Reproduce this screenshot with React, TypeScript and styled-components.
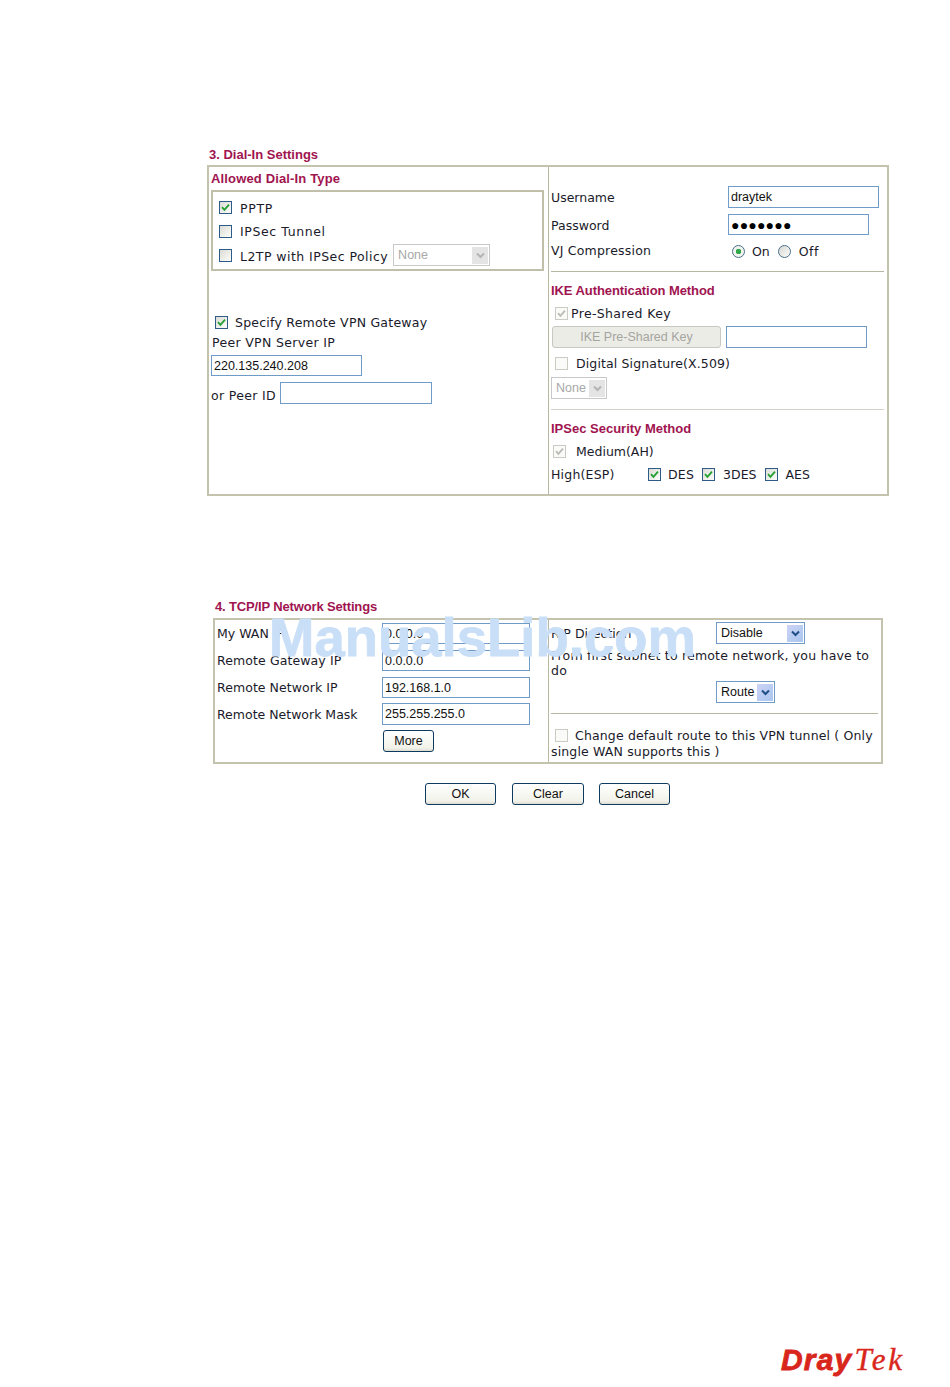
import React from "react";
import styled, { createGlobalStyle } from "styled-components";

const GlobalStyle = createGlobalStyle`
  html, body {
    margin: 0;
    padding: 0;
    background: #fff;
  }
`;

const Page = styled.div`
  position: relative;
  width: 950px;
  height: 1387px;
  overflow: hidden;
  color: #1a1a2a;
  font-family: "DejaVu Sans", sans-serif;
  font-size: 12.5px;
  display: flex;
  flex-direction: column;
`;

const Section = styled.section<{ $top: number; $left: number; $width: number }>`
  margin-top: ${(p) => p.$top}px;
  margin-left: ${(p) => p.$left}px;
  width: ${(p) => p.$width}px;
`;

const SectionTitle = styled.h3<{ $indent: number; $below: number; $track?: number }>`
  margin: 0 0 ${(p) => p.$below}px;
  height: 20px;
  padding-left: ${(p) => p.$indent}px;
  font: bold 13px/20px "Liberation Sans", sans-serif;
  letter-spacing: ${(p) => p.$track ?? 0}px;
  color: #a0144f;
`;

const Panel = styled.div<{ $height: number; $split: number }>`
  box-sizing: border-box;
  height: ${(p) => p.$height}px;
  border: 2px solid #c4c4ae;
  display: grid;
  grid-template-columns: ${(p) => p.$split}px 1fr;
`;

const Column = styled.div<{ $divider?: boolean; $pad: number }>`
  display: flex;
  flex-direction: column;
  padding-left: ${(p) => p.$pad}px;
  padding-right: 4px;
  ${(p) => p.$divider && "border-left: 1px solid #b8b8a2;"}
`;

const Row = styled.div<{ $h: number; $mt?: number; $pl?: number }>`
  display: flex;
  align-items: center;
  flex: none;
  height: ${(p) => p.$h}px;
  margin-top: ${(p) => p.$mt ?? 0}px;
  padding-left: ${(p) => p.$pl ?? 0}px;
  white-space: nowrap;
`;

const Heading = styled.div<{ $h: number; $mt?: number; $track?: number }>`
  flex: none;
  height: ${(p) => p.$h}px;
  margin-top: ${(p) => p.$mt ?? 0}px;
  font: bold 13px/${(p) => p.$h}px "Liberation Sans", sans-serif;
  letter-spacing: ${(p) => p.$track ?? 0}px;
  color: #a0144f;
`;

const TypeBox = styled.div`
  box-sizing: border-box;
  width: 333px;
  height: 81px;
  border: 2px solid #c0c0aa;
  padding: 3px 0 0 6px;
`;

const Divider = styled.hr<{ $mt: number; $width: number; $light?: boolean }>`
  flex: none;
  width: ${(p) => p.$width}px;
  height: 1px;
  margin: ${(p) => p.$mt}px 0 0;
  border: 0;
  background: ${(p) => (p.$light ? "#d4d4c8" : "#b8b8a2")};
`;

// $track widens the text, $drop pushes it down a little in its centred row
const Label = styled.span<{ $width?: number; $gap?: number; $track?: number; $drop?: number }>`
  flex: none;
  ${(p) => p.$width && `width: ${p.$width}px;`}
  margin-left: ${(p) => p.$gap ?? 0}px;
  padding-top: ${(p) => p.$drop ?? 0}px;
  letter-spacing: ${(p) => p.$track ?? 0}px;
`;

const Box = styled.span<{ $disabled?: boolean; $gap?: number }>`
  flex: none;
  box-sizing: border-box;
  width: 13px;
  height: 13px;
  margin-left: ${(p) => p.$gap ?? 0}px;
  border: 1px solid ${(p) => (p.$disabled ? "#cbcbc4" : "#2d5c88")};
  background: ${(p) =>
    p.$disabled ? "#fafaf8" : "linear-gradient(135deg, #dcdcd6, #fdfdfb)"};
  display: flex;
  align-items: center;
  justify-content: center;
`;

const Check = ({ on, disabled, gap }: { on?: boolean; disabled?: boolean; gap?: number }) => (
  <Box $disabled={disabled} $gap={gap}>
    {on && (
      <svg width="9" height="9" viewBox="0 0 9 9">
        <path
          d="M1 4.2 L3.4 6.8 L8 1.6"
          fill="none"
          stroke={disabled ? "#bcbcb6" : "#23a030"}
          strokeWidth="1.8"
        />
      </svg>
    )}
  </Box>
);

const Radio = styled.span<{ $on?: boolean; $gap?: number }>`
  flex: none;
  box-sizing: border-box;
  width: 13px;
  height: 13px;
  margin: 2px 0 0 ${(p) => p.$gap ?? 0}px;
  border: 1px solid #48708c;
  border-radius: 50%;
  background: ${(p) =>
    p.$on
      ? "radial-gradient(circle, #2fa84a 0 2.5px, #f2f2ee 3px)"
      : "linear-gradient(135deg, #d8d8d2, #fbfbf9)"};
`;

const TextField = styled.div<{ $width: number; $height?: number; $gap?: number }>`
  flex: none;
  box-sizing: border-box;
  width: ${(p) => p.$width}px;
  height: ${(p) => p.$height ?? 22}px;
  margin-left: ${(p) => p.$gap ?? 0}px;
  padding-left: 2px;
  border: 1px solid #6e9bc8;
  background: #fff;
  font: 12.5px/20px "Liberation Sans", sans-serif;
  color: #111;
  white-space: nowrap;
  overflow: hidden;
`;

const Dots = styled.span`
  font-size: 14px;
  letter-spacing: 0.2px;
  color: #000;
`;

const Dropdown = styled.div<{ $width: number; $disabled?: boolean; $gap?: number }>`
  flex: none;
  box-sizing: border-box;
  width: ${(p) => p.$width}px;
  height: 22px;
  margin-left: ${(p) => p.$gap ?? 0}px;
  padding: 1px 1px 1px 4px;
  border: 1px solid ${(p) => (p.$disabled ? "#c8c8c8" : "#6e9bc8")};
  display: flex;
  align-items: center;
  justify-content: space-between;
  font: 12.5px "Liberation Sans", sans-serif;
  color: ${(p) => (p.$disabled ? "#a8a8a8" : "#111")};
`;

const Arrow = styled.span<{ $disabled?: boolean }>`
  flex: none;
  width: 16px;
  height: 17px;
  display: flex;
  align-items: center;
  justify-content: center;
  background: ${(p) =>
    p.$disabled ? "#e4e4e4" : "linear-gradient(135deg, #cdd3f6, #a9c6ee)"};
`;

const Select = ({
  value,
  width,
  disabled,
  gap,
}: {
  value: string;
  width: number;
  disabled?: boolean;
  gap?: number;
}) => (
  <Dropdown $width={width} $disabled={disabled} $gap={gap}>
    {value}
    <Arrow $disabled={disabled}>
      <svg width="9" height="7" viewBox="0 0 9 7">
        <path
          d="M1 1.5 L4.5 5 L8 1.5"
          fill="none"
          stroke={disabled ? "#b4b4b4" : "#1f4f86"}
          strokeWidth="2"
        />
      </svg>
    </Arrow>
  </Dropdown>
);

const KeyButton = styled.div`
  flex: none;
  box-sizing: border-box;
  width: 169px;
  height: 22px;
  margin-left: 1px;
  border: 1px solid #c8c8c2;
  border-radius: 3px;
  background: #ecece6;
  color: #a4a4a0;
  font: 12.5px/20px "Liberation Sans", sans-serif;
  text-align: center;
`;

const FormButton = styled.button<{ $width: number; $gap?: number }>`
  flex: none;
  box-sizing: border-box;
  width: ${(p) => p.$width}px;
  height: 22px;
  margin: 0 0 0 ${(p) => p.$gap ?? 0}px;
  padding: 0;
  border: 1px solid #0f3a5f;
  border-radius: 3px;
  background: linear-gradient(#ffffff, #f2f2ea 85%, #dcdcd0);
  color: #111;
  font: 12.5px "Liberation Sans", sans-serif;
`;

const Wrapped = styled.div<{ $mt?: number; $track?: number }>`
  flex: none;
  margin-top: ${(p) => p.$mt ?? 0}px;
  line-height: 15px;
  letter-spacing: ${(p) => p.$track ?? 0}px;
`;

const Footer = styled.div`
  display: flex;
  margin: 19px 0 0 425px;
`;

const Logo = styled.div`
  margin: 536px 0 0 781px;
  height: 38px;
  display: flex;
  align-items: baseline;
  color: #d9261c;
`;

const LogoDray = styled.span`
  font: italic bold 30px/38px "Liberation Sans", sans-serif;
  letter-spacing: 1.2px;
  -webkit-text-stroke: 0.8px #d9261c;
`;

const LogoTek = styled.span`
  font: italic 31px/38px "Liberation Serif", serif;
  margin-left: 2px;
  letter-spacing: 2.8px;
  -webkit-text-stroke: 0.4px #d9261c;
`;

const Watermark = styled.div`
  position: absolute;
  left: 269px;
  top: 605px;
  font: bold 54.5px/66px "Liberation Sans", sans-serif;
  color: #c9dff7;
  -webkit-text-stroke: 0.8px #c9dff7;
  white-space: nowrap;
`;

export default function App(): JSX.Element {
  return (
    <Page>
      <GlobalStyle />
      <Section $top={145} $left={207} $width={682}>
        <SectionTitle $indent={2} $below={0}>3. Dial-In Settings</SectionTitle>
        <Panel $height={331} $split={339}>
          <Column $pad={2}>
            <Heading $h={23} $track={0.15}>Allowed Dial-In Type</Heading>
            <TypeBox>
              <Row $h={24}>
                <Check on />
                <Label $gap={8} $track={0.7} $drop={2}>PPTP</Label>
              </Row>
              <Row $h={24}>
                <Check />
                <Label $gap={8} $track={0.6}>IPSec Tunnel</Label>
              </Row>
              <Row $h={24}>
                <Check />
                <Label $gap={8} $track={0.45} $drop={3}>L2TP with IPSec Policy</Label>
                <Select value="None" width={97} disabled gap={5} />
              </Row>
            </TypeBox>
            <Row $h={22} $mt={40} $pl={4}>
              <Check on />
              <Label $gap={7} $track={0.23}>Specify Remote VPN Gateway</Label>
            </Row>
            <Row $h={19} $pl={1}>
              <Label $track={0.33}>Peer VPN Server IP</Label>
            </Row>
            <Row $h={21} $mt={3}>
              <TextField $width={151} $height={21}>220.135.240.208</TextField>
            </Row>
            <Row $h={22} $mt={6}>
              <Label $track={0.33} $drop={4}>or Peer ID</Label>
              <TextField $width={152} $gap={4} />
            </Row>
          </Column>
          <Column $divider $pad={2}>
            <Row $h={22} $mt={19}>
              <Label $width={177}>Username</Label>
              <TextField $width={151}>draytek</TextField>
            </Row>
            <Row $h={21} $mt={6}>
              <Label $width={177} $drop={2}>Password</Label>
              <TextField $width={141} $height={21}>
                <Dots>●●●●●●●</Dots>
              </TextField>
            </Row>
            <Row $h={22} $mt={4}>
              <Label $width={181} $track={0.2}>VJ Compression</Label>
              <Radio $on />
              <Label $gap={7} $drop={2}>On</Label>
              <Radio $gap={8} />
              <Label $gap={8} $track={0.5} $drop={2}>Off</Label>
            </Row>
            <Divider $mt={10} $width={333} />
            <Heading $h={20} $mt={9} $track={-0.08}>IKE Authentication Method</Heading>
            <Row $h={24} $pl={4}>
              <Check on disabled />
              <Label $gap={3} $track={0.35}>Pre-Shared Key</Label>
            </Row>
            <Row $h={22} $mt={1}>
              <KeyButton>IKE Pre-Shared Key</KeyButton>
              <TextField $width={141} $gap={5} />
            </Row>
            <Row $h={22} $mt={4} $pl={4}>
              <Check disabled />
              <Label $gap={8} $track={0.13}>Digital Signature(X.509)</Label>
            </Row>
            <Row $h={22} $mt={3}>
              <Select value="None" width={56} disabled />
            </Row>
            <Divider $mt={10} $width={333} $light />
            <Heading $h={20} $mt={9}>IPSec Security Method</Heading>
            <Row $h={24} $pl={2}>
              <Check on disabled />
              <Label $gap={10}>Medium(AH)</Label>
            </Row>
            <Row $h={22}>
              <Label $width={97} $track={0.2}>High(ESP)</Label>
              <Check on />
              <Label $gap={7} $track={0.2}>DES</Label>
              <Check on gap={8} />
              <Label $gap={8}>3DES</Label>
              <Check on gap={9} />
              <Label $gap={7}>AES</Label>
            </Row>
          </Column>
        </Panel>
      </Section>

      <Section $top={101} $left={213} $width={670}>
        <SectionTitle $indent={2} $below={1} $track={-0.15}>4. TCP/IP Network Settings</SectionTitle>
        <Panel $height={146} $split={333}>
          <Column $pad={2}>
            <Row $h={21} $mt={3}>
              <Label $width={165}>My WAN IP</Label>
              <TextField $width={148} $height={21}>0.0.0.0</TextField>
            </Row>
            <Row $h={21} $mt={6}>
              <Label $width={165} $track={0.1}>Remote Gateway IP</Label>
              <TextField $width={148} $height={21}>0.0.0.0</TextField>
            </Row>
            <Row $h={21} $mt={6}>
              <Label $width={165} $track={0.06}>Remote Network IP</Label>
              <TextField $width={148} $height={21}>192.168.1.0</TextField>
            </Row>
            <Row $h={22} $mt={5}>
              <Label $width={165}>Remote Network Mask</Label>
              <TextField $width={148}>255.255.255.0</TextField>
            </Row>
            <Row $h={21} $mt={5} $pl={166}>
              <FormButton $width={51}>More</FormButton>
            </Row>
          </Column>
          <Column $divider $pad={2}>
            <Row $h={22} $mt={2}>
              <Label $width={165}>RIP Direction</Label>
              <Select value="Disable" width={89} />
            </Row>
            <Wrapped $mt={4} $track={0.2}>
              From first subnet to remote network, you have to
              <br />
              do
            </Wrapped>
            <Row $h={22} $mt={3} $pl={165}>
              <Select value="Route" width={59} />
            </Row>
            <Divider $mt={10} $width={327} />
            <Row $h={21} $mt={11} $pl={4}>
              <Check disabled />
              <Label $gap={7} $track={0.15}>Change default route to this VPN tunnel ( Only</Label>
            </Row>
            <Wrapped $mt={-2} $track={0.15}>single WAN supports this )</Wrapped>
          </Column>
        </Panel>
      </Section>

      <Footer>
        <FormButton $width={71}>OK</FormButton>
        <FormButton $width={72} $gap={16}>Clear</FormButton>
        <FormButton $width={71} $gap={15}>Cancel</FormButton>
      </Footer>

      <Logo>
        <LogoDray>Dray</LogoDray>
        <LogoTek>Tek</LogoTek>
      </Logo>

      <Watermark>ManualsLib.com</Watermark>
    </Page>
  );
}
